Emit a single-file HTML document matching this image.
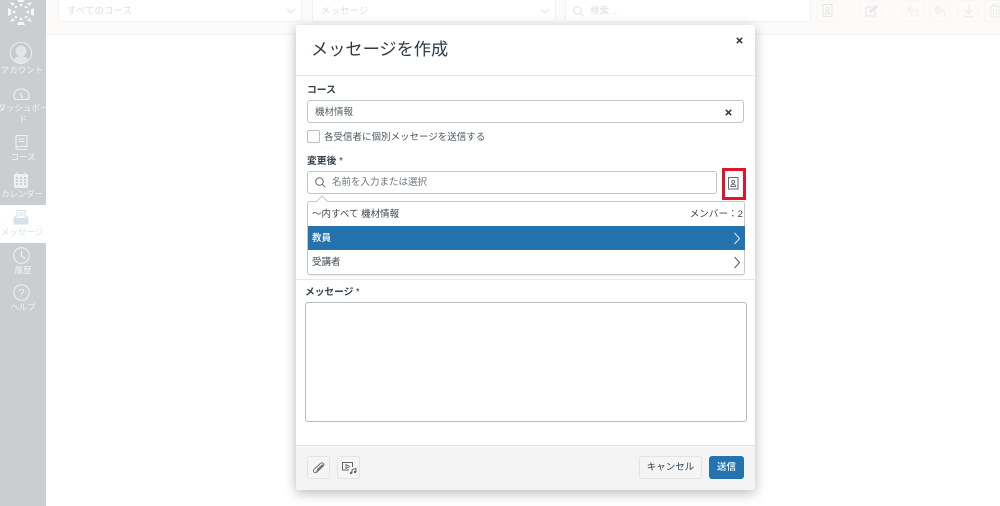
<!DOCTYPE html>
<html lang="ja"><head><meta charset="utf-8"><style>
html,body{margin:0;padding:0;width:1000px;height:506px;overflow:hidden;background:#fff}
body{position:relative;font-family:"Liberation Sans","Noto Sans CJK JP",sans-serif;color:#2d3b45}
.a{position:absolute;box-sizing:border-box;white-space:nowrap}
.nav{position:absolute;left:0;width:46px;text-align:center;color:#f1f2f3;font-size:8.5px;line-height:11px;overflow:hidden}
svg{position:absolute;overflow:visible}
.lb{font-size:9.800px;font-weight:bold;color:#36424b;line-height:14px}
.lb span{font-weight:400}
.box{border:1px solid #c0c5c9;border-radius:3px;background:#fff}
.tb{border:1px solid #f8f7f6;border-radius:3px;height:22px;top:0}
</style></head><body>

<!-- background toolbar -->
<div class="a" style="left:46px;top:0;width:954px;height:35px;background:#fcfbfa;border-bottom:1px solid #f1f2f3"></div>
<div class="a" style="left:58px;top:-3px;width:244px;height:25px;background:#fff;border:1px solid #f0f1f2;border-radius:3px"></div>
<div class="a" style="left:312px;top:-3px;width:244px;height:25px;background:#fff;border:1px solid #f0f1f2;border-radius:3px"></div>
<div class="a" style="left:565px;top:-3px;width:246px;height:25px;background:#fff;border:1px solid #f0f1f2;border-radius:3px"></div>
<div class="a" style="left:67px;top:5px;font-size:9.5px;line-height:14px;color:#dcdfe1">すべてのコース</div>
<div class="a" style="left:321px;top:5px;font-size:9.5px;line-height:14px;color:#dcdfe1">メッセージ</div>
<div class="a" style="left:590px;top:5px;font-size:9.5px;line-height:14px;color:#dcdfe1">検索...</div>
<svg style="left:286px;top:8px" width="10" height="7"><path d="M1 1l4 4 4-4" fill="none" stroke="#dfe1e3"/></svg>
<svg style="left:540px;top:8px" width="10" height="7"><path d="M1 1l4 4 4-4" fill="none" stroke="#dfe1e3"/></svg>
<svg style="left:573px;top:6px" width="11" height="11"><circle cx="4.500" cy="4.500" r="3.800" fill="none" stroke="#dfe1e3"/><path d="M7.500 7.500l3 3" stroke="#dfe1e3"/></svg>
<div class="a tb" style="left:816px;width:22px"></div>
<div class="a tb" style="left:860px;width:22px"></div>
<div class="a tb" style="left:902px;width:22px"></div>
<div class="a tb" style="left:929px;width:22px"></div>
<div class="a tb" style="left:957px;width:22px"></div>
<div class="a tb" style="left:984px;width:22px"></div>
<svg style="left:822px;top:4px" width="11" height="13"><rect x="1" y=".5" width="9" height="12" fill="none" stroke="#e6e6e6"/><circle cx="5.500" cy="5" r="1.600" fill="none" stroke="#e6e6e6"/><path d="M3 10c0-3 5-3 5 0z" fill="none" stroke="#e6e6e6"/></svg>
<svg style="left:865px;top:4px" width="13" height="13"><path d="M1 3h7M1 3v9h9V6" fill="none" stroke="#e6e6e6" stroke-width="1.200"/><path d="M4 9l1-3 6-5 2 2-6 5z" fill="#e6e6e6"/></svg>
<svg style="left:907px;top:5px" width="13" height="12"><path d="M5 1L1 5l4 4M1 5h6c3 0 4 3 4 6" fill="none" stroke="#f0f0f0" stroke-width="1.200"/></svg>
<svg style="left:934px;top:5px" width="13" height="12"><path d="M4 1L1 5l3 4M7 1L3 5l4 4M3 5h4c3 0 4 3 4 6" fill="none" stroke="#f0f0f0" stroke-width="1.200"/></svg>
<svg style="left:962px;top:4px" width="13" height="14"><path d="M6.500 1v8M3 6l3.500 3.500L10 6M1 12.500h11" fill="none" stroke="#ececec" stroke-width="1.200"/></svg>
<svg style="left:990px;top:4px" width="10" height="14"><path d="M0 2.500h10M3 2V.8h4V2M1 3v10h8V3M3.500 5v6M6.500 5v6" fill="none" stroke="#ececec"/></svg>

<!-- sidebar -->
<div class="a" style="left:0;top:0;width:46px;height:506px;background:#cbced1"></div>
<svg style="left:7px;top:-2px" width="28" height="28">
<g fill="#f6f7f7"><circle cx="14" cy="7" r="1.400"/><circle cx="14" cy="21" r="1.400"/><circle cx="7" cy="14" r="1.400"/><circle cx="21" cy="14" r="1.400"/><circle cx="9" cy="9" r="1.300"/><circle cx="19" cy="9" r="1.300"/><circle cx="9" cy="19" r="1.300"/><circle cx="19" cy="19" r="1.300"/>
<path d="M10 1h8l-1.500 3h-5z"/><path d="M10 27h8l-1.500-3h-5z"/><path d="M1 10v8l3-1.500v-5z"/><path d="M27 10v8l-3-1.500v-5z"/>
<path d="M3 4l5 1.500-2.500 2.500z"/><path d="M25 4l-5 1.500 2.500 2.500z"/><path d="M3 24l5-1.500-2.500-2.500z"/><path d="M25 24l-5-1.500 2.500-2.500z"/></g></svg>

<svg style="left:10px;top:42px" width="22" height="22"><circle cx="11" cy="11" r="10.500" fill="#c6c9cb" stroke="#eef0f0"/><circle cx="11" cy="9" r="5.500" fill="#e2e4e5"/><path d="M3 18c3-5 13-5 16 0-4 4-12 4-16 0z" fill="#e2e4e5"/></svg>
<div class="nav" style="top:65px;margin-left:-1px">アカウント</div>

<svg style="left:13px;top:88px" width="17" height="12"><path d="M2 11.500C-.5 7 2 1 8.500 1S17.500 7 15 11.500z" fill="none" stroke="#f1f2f3" stroke-width="1.100"/><path d="M7 5l2.500 5" stroke="#f1f2f3" stroke-width="1.300"/></svg>
<div class="nav" style="top:103px;left:-6px;width:58px;text-align:center">ダッシュボー</div>
<div class="nav" style="top:114px">ド</div>

<svg style="left:15px;top:135px" width="13" height="16"><path d="M1 14V2c0-1 .5-1.500 1.500-1.500h9.500v11H3c-1.500 0-2 .5-2 1.500s.5 1.500 2 1.500h9" fill="none" stroke="#f1f2f3" stroke-width="1.100"/><path d="M3.500 4h6M3.500 6.500h6" stroke="#f1f2f3"/></svg>
<div class="nav" style="top:152px">コース</div>

<svg style="left:14px;top:172px" width="14" height="16"><rect x="0" y="2" width="14" height="14" fill="#eef0f0"/><path d="M3 0v3M11 0v3" stroke="#eef0f0"/><path d="M2 6h2M6 6h2M10 6h2M2 9h2M6 9h2M10 9h2M2 12h2M6 12h2M10 12h2" stroke="#bfc3c6" stroke-width="1.500"/></svg>
<div class="nav" style="top:189px;margin-left:-1px;letter-spacing:-.2px">カレンダー</div>

<div class="a" style="left:0;top:205px;width:46px;height:38px;background:#fff"></div>
<svg style="left:13px;top:210px" width="16" height="15"><path d="M4 .5h8v8H4z" fill="none" stroke="#d3e2ee" stroke-width="1.100"/><path d="M5.500 3h5M5.500 5h5" stroke="#d3e2ee"/><path d="M3 5L.5 8v6.500h15V8L13 5v4H3z" fill="#d3e2ee"/></svg>
<div class="nav" style="top:227px;color:#d3e2ee;margin-left:-1px">メッセージ</div>

<svg style="left:13px;top:247px" width="17" height="17"><circle cx="8.500" cy="8.500" r="7.800" fill="none" stroke="#f1f2f3" stroke-width="1.100"/><path d="M8.500 4v5l3.500 2.500" fill="none" stroke="#f1f2f3" stroke-width="1.100"/></svg>
<div class="nav" style="top:265px">履歴</div>

<svg style="left:13px;top:284px" width="17" height="17"><circle cx="8.500" cy="8.500" r="7.800" fill="none" stroke="#f1f2f3"/><text x="8.500" y="12.500" text-anchor="middle" font-size="11" fill="#f1f2f3" font-family="Liberation Sans">?</text></svg>
<div class="nav" style="top:302px">ヘルプ</div>

<!-- modal -->
<div class="a" style="left:296px;top:25px;width:459px;height:465px;background:#fff;border-radius:3px;box-shadow:0 3px 12px rgba(0,0,0,.28)"></div>
<div class="a" style="left:311px;top:37px;font-size:17.200px;line-height:24px;color:#2d3b45">メッセージを作成</div>
<svg style="left:736px;top:37px" width="7" height="7"><path d="M.8.800l5.400 5.400M6.200.800L.8 6.200" stroke="#2d3b45" stroke-width="1.500"/></svg>
<div class="a" style="left:296px;top:75px;width:459px;height:1px;background:#e6e8e9"></div>

<div class="a lb" style="left:307px;top:84px">コース</div>
<div class="a box" style="left:307px;top:100px;width:437px;height:23px"></div>
<div class="a" style="left:315px;top:106px;font-size:9.500px;line-height:14px;color:#525d65">機材情報</div>
<svg style="left:725px;top:109px" width="7" height="7"><path d="M.8.800l5.400 5.400M6.200.800L.8 6.200" stroke="#2d3b45" stroke-width="1.500"/></svg>

<div class="a" style="left:307px;top:130px;width:13px;height:13px;border:1px solid #b8bdc1;border-radius:2px;background:#fff"></div>
<div class="a" style="left:324px;top:129px;font-size:9.500px;line-height:14px;padding-top:2px;color:#4b565e">各受信者に個別メッセージを送信する</div>

<div class="a lb" style="left:307px;top:155px">変更後 <span>*</span></div>
<div class="a box" style="left:307px;top:171px;width:410px;height:23px"></div>
<svg style="left:315px;top:177px" width="11" height="11"><circle cx="4.500" cy="4.500" r="3.800" fill="none" stroke="#5a656d"/><path d="M7.300 7.300l3 3" stroke="#5a656d"/></svg>
<div class="a" style="left:332px;top:176px;font-size:9.500px;line-height:14px;color:#6b757c">名前を入力または選択</div>

<div class="a" style="left:722px;top:168px;width:24px;height:32px;border:3px solid #e0142a;background:#fff"></div>
<svg style="left:728px;top:177px" width="11" height="13"><rect x=".5" y=".5" width="9.500" height="11.500" fill="none" stroke="#5f6a72"/><circle cx="5.200" cy="4.800" r="1.500" fill="none" stroke="#5f6a72" stroke-width=".9"/><path d="M2.700 9.500c0-3 5-3 5 0z" fill="none" stroke="#5f6a72" stroke-width=".9"/></svg>

<!-- dropdown -->
<div class="a" style="left:307px;top:201px;width:438px;height:74px;background:#fff;border:1px solid #c3c8cc;border-radius:3px;box-shadow:0 1px 1px rgba(0,0,0,.08)"></div>
<div class="a" style="left:318px;top:197px;width:8px;height:8px;background:#fff;border-left:1px solid #c3c8cc;border-top:1px solid #c3c8cc;transform:rotate(45deg)"></div>
<div class="a" style="left:312px;top:208px;font-size:9.500px;line-height:14px;color:#3a464f">〜内すべて 機材情報</div>
<div class="a" style="left:683px;top:208px;width:60px;text-align:right;font-size:9.600px;line-height:14px;color:#3a464f">メンバー：2</div>
<div class="a" style="left:308px;top:226px;width:437px;height:24px;background:#2573ae"></div>
<div class="a" style="left:312px;top:232px;font-size:9.500px;line-height:14px;color:#fff;font-weight:500">教員</div>
<svg style="left:733px;top:232px" width="8" height="13"><path d="M1.500 1l5 5.500-5 5.500" fill="none" stroke="#d5e3ee" stroke-width="1.100"/></svg>
<div class="a" style="left:312px;top:256px;font-size:9.500px;line-height:14px;color:#3a464f">受講者</div>
<svg style="left:733px;top:256px" width="8" height="13"><path d="M1.500 1l5 5.500-5 5.500" fill="none" stroke="#5a656d" stroke-width="1.100"/></svg>

<div class="a" style="left:296px;top:279px;width:459px;height:1px;background:#e6e8e9"></div>
<div class="a lb" style="left:305px;top:286px;letter-spacing:-.1px">メッセージ <span>*</span></div>
<div class="a box" style="left:305px;top:302px;width:442px;height:120px;border-color:#b3b9be"></div>

<!-- footer -->
<div class="a" style="left:296px;top:445px;width:459px;height:45px;background:#f4f4f4;border-top:1px solid #e5e5e5;border-radius:0 0 3px 3px"></div>
<div class="a" style="left:307px;top:456px;width:23px;height:23px;background:#f5f5f5;border:1px solid #e2e3e4;border-radius:3px"></div>
<svg style="left:312px;top:461px" width="14" height="13"><path d="M2.800 7.500L8.500 2.300c1.800-1.500 4.500.8 2.800 2.700L5 11c-1.800 1.700-4.800-.3-3.200-2.500L8 3M5 8.700L10.500 3.600M4.300 10.500L11.500 4" fill="none" stroke="#6a747c" stroke-width=".9"/></svg>
<div class="a" style="left:337px;top:456px;width:23px;height:23px;background:#f5f5f5;border:1px solid #e2e3e4;border-radius:3px"></div>
<svg style="left:342px;top:462px" width="15" height="12"><path d="M7 8H.5V.5h10V5" fill="none" stroke="#5f6a72"/><path d="M4 2.500v4l3.500-2z" fill="none" stroke="#5f6a72" stroke-width=".9"/><path d="M10 7.500l4-1V10M10 7.500V11" fill="none" stroke="#5f6a72"/><circle cx="9" cy="11" r="1.200" fill="#5f6a72"/><circle cx="13" cy="10" r="1.200" fill="#5f6a72"/></svg>
<div class="a" style="left:639px;top:456px;width:63px;height:23px;background:#f5f5f5;border:1px solid #e2e3e4;border-radius:3px;font-size:9.500px;line-height:22px;text-align:center;color:#2d3b45">キャンセル</div>
<div class="a" style="left:709px;top:456px;width:35px;height:23px;background:#2573ae;border-radius:3px;font-size:9.500px;line-height:24px;text-align:center;color:#fff;font-weight:500">送信</div>
</body></html>
